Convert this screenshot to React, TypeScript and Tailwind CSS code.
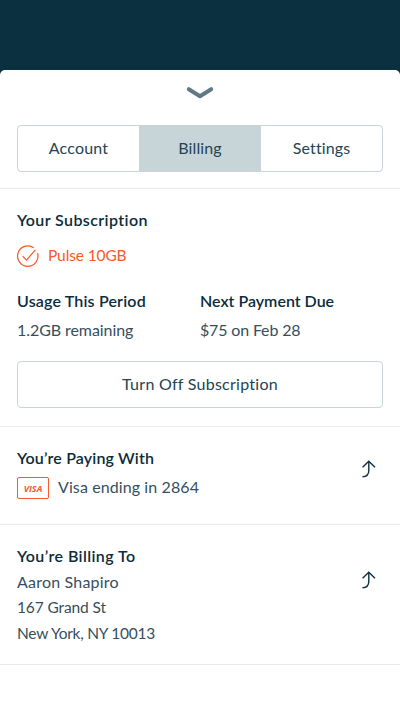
import React from "react";

function ChangeArrow() {
  return (
    <svg width="14" height="18" viewBox="0 0 14 18" fill="none" stroke="#0b3040" strokeWidth="1.4">
      <path d="M0.5 16.8C4.5 16.6 6.8 14.8 6.8 10.5V1.5" />
      <path d="M0.6 7.2L6.8 1.2L13 7.2" />
    </svg>
  );
}

const heading = "h-6 leading-6 font-semibold text-[#0b2c3a] whitespace-nowrap";
const line = "h-6 leading-6 whitespace-nowrap";

export default function App() {
  return (
    <div className="h-[711px] w-[400px] overflow-hidden bg-[#0b3040] pt-[70px] font-[Lato,'Open_Sans',sans-serif] text-base text-[#354f5c]">
      <main className="h-full rounded-t-[5px] bg-white">
        <header className="h-[119px] border-b border-[#e6ebed]">
          <div className="flex h-[55px] justify-center pt-4">
            <svg width="28" height="14" viewBox="0 0 28 14" fill="none" stroke="#627986" strokeWidth="4" strokeLinecap="round" strokeLinejoin="round">
              <path d="M2.8 3.2L14 10.2L25.2 3.2" />
            </svg>
          </div>
          <nav className="mx-[17px] flex h-[47px] overflow-hidden rounded border border-[#c7d4d8] text-[#234452]">
            <button className="w-[121px] pb-[2px] tracking-[0.2px]">Account</button>
            <button className="w-[122px] bg-[#c7d4d8] pb-[2px] tracking-[0.1px]">Billing</button>
            <button className="flex-1 pb-[2px] tracking-[0.1px]">Settings</button>
          </nav>
        </header>

        <section className="h-[238px] border-b border-[#e6ebed] px-[17px] pt-[19px]">
          <h2 className={`${heading} tracking-[0.4px]`}>Your Subscription</h2>
          <div className="mt-3 flex h-6 items-center gap-[9px] text-[#f9582b]">
            <svg width="22" height="22" viewBox="0 0 22 22" fill="none" stroke="#f9582b" strokeWidth="1.2">
              <path d="M16.7 2.8A10.2 10.2 0 1 0 20.5 8" />
              <path d="M5.6 11.2L9.5 15.1L18.4 4.8" />
            </svg>
            <span className="text-[15.5px] tracking-[-0.12px]">Pulse 10GB</span>
          </div>
          <div className="mt-[21px] grid grid-cols-2">
            <div>
              <h2 className={`${heading} tracking-[0.17px]`}>Usage This Period</h2>
              <p className={`${line} mt-[5px] tracking-[-0.07px]`}>1.2GB remaining</p>
            </div>
            <div>
              <h2 className={`${heading} tracking-[0px]`}>Next Payment Due</h2>
              <p className={`${line} mt-[5px] tracking-[-0.16px]`}>$75 on Feb 28</p>
            </div>
          </div>
          <button className="mt-[19px] h-[47px] w-full rounded border border-[#c7d4d8] pb-[2px] text-[#234452] tracking-[0.26px]">
            Turn Off Subscription
          </button>
        </section>

        <section className="flex h-[98px] justify-between border-b border-[#e6ebed] pl-[17px] pr-[24px] pt-[19px]">
          <div>
            <h2 className={`${heading} tracking-[0.15px]`}>You’re Paying With</h2>
            <div className="mt-[6px] flex h-6 items-center gap-[9px]">
              <span className="flex h-[22px] w-8 items-center justify-center rounded-[2px] border border-[#f9582b] font-['Open_Sans'] text-[9px] font-bold italic leading-none text-[#f9582b]">
                VISA
              </span>
              <span className="-mt-[2px] tracking-[0.1px]">Visa ending in 2864</span>
            </div>
          </div>
          <button className="mt-[14px] h-[18px]" aria-label="Change card"><ChangeArrow /></button>
        </section>

        <section className="flex h-[140px] justify-between border-b border-[#e6ebed] pl-[17px] pr-[24px] pt-[19px]">
          <div>
            <h2 className={`${heading} tracking-[0.4px]`}>You’re Billing To</h2>
            <address className="mt-px not-italic">
              <p className="leading-[26px] tracking-[0.2px]">Aaron Shapiro</p>
              <p className="text-[15.5px] leading-[24px] tracking-[-0.12px]">167 Grand St</p>
              <p className="text-[15.5px] leading-[28px] tracking-[-0.25px]">New York, NY 10013</p>
            </address>
          </div>
          <button className="mt-[27px] h-[18px]" aria-label="Change address"><ChangeArrow /></button>
        </section>
      </main>
    </div>
  );
}
